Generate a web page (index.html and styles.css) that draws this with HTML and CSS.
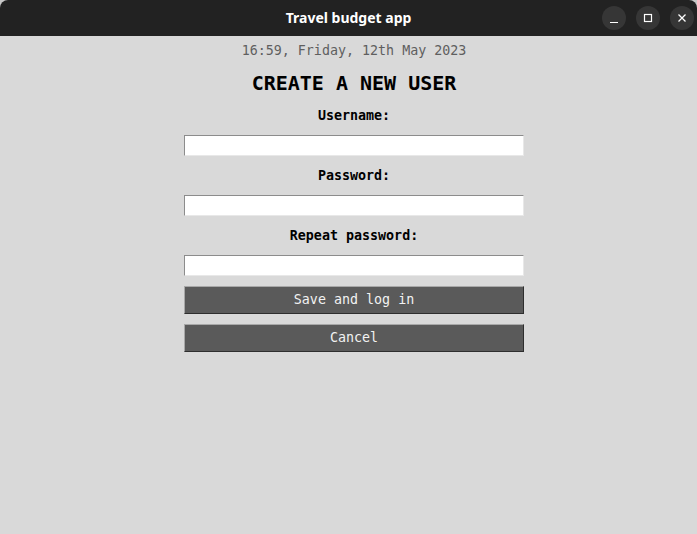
FILE: index.html
```html
<!DOCTYPE html>
<html lang="en">
<head>
<meta charset="utf-8">
<title>Travel budget app</title>
<link rel="stylesheet" href="styles.css">
</head>
<body>
<div class="window">
  <header class="titlebar">
    <div class="tb-spacer"></div>
    <div class="tb-title">Travel budget app</div>
    <div class="tb-controls">
      <span class="tb-btn"><svg width="24" height="24" viewBox="0 0 24 24"><line x1="8" y1="16.5" x2="16" y2="16.5" stroke="#fff" stroke-width="1.2"/></svg></span>
      <span class="tb-btn"><svg width="24" height="24" viewBox="0 0 24 24"><rect x="8.5" y="8.5" width="7" height="7" fill="none" stroke="#fff" stroke-width="1.2"/></svg></span>
      <span class="tb-btn"><svg width="24" height="24" viewBox="0 0 24 24"><path d="M8.5 8.5 L15.5 15.5 M15.5 8.5 L8.5 15.5" stroke="#fff" stroke-width="1.3"/></svg></span>
    </div>
  </header>
  <main class="content">
    <div class="date">16:59, Friday, 12th May 2023</div>
    <h1 class="heading">CREATE A NEW USER</h1>
    <form class="form">
      <label class="label">Username:</label>
      <input class="entry" type="text">
      <label class="label">Password:</label>
      <input class="entry" type="password">
      <label class="label">Repeat password:</label>
      <input class="entry" type="password">
      <button type="button" class="btn btn-first">Save and log in</button>
      <button type="button" class="btn">Cancel</button>
    </form>
  </main>
</div>
</body>
</html>
```

FILE: styles.css
```css
html, body {
  margin: 0;
  padding: 0;
  background: #c8c8c8;
}
.window {
  width: 697px;
  height: 534px;
  background: #d9d9d9;
  border-radius: 8px 8px 0 0;
  overflow: hidden;
  display: flex;
  flex-direction: column;
}
.titlebar {
  height: 36px;
  background: #222222;
  display: grid;
  grid-template-columns: 1fr auto 1fr;
  align-items: center;
}
.tb-title {
  color: #ffffff;
  font-family: "Noto Sans", "DejaVu Sans", sans-serif;
  font-weight: 700;
  font-size: 14px;
  line-height: 36px;
}
.tb-controls {
  display: flex;
  justify-content: flex-end;
  gap: 10px;
  padding-right: 3px;
}
.tb-btn {
  width: 24px;
  height: 24px;
  border-radius: 50%;
  background: #363636;
  display: block;
}
.tb-btn svg { display: block; }
.content {
  display: flex;
  flex-direction: column;
  align-items: center;
  padding-left: 11px;
  font-family: "DejaVu Sans Mono", monospace;
}
.date {
  margin-top: 7px;
  font-size: 13.33px;
  line-height: 16px;
  color: #5f5f5f;
}
.heading {
  margin: 12px 0 0;
  font-size: 20px;
  line-height: 24px;
  font-weight: 700;
  color: #000;
}
.form {
  display: flex;
  flex-direction: column;
  align-items: center;
  margin-top: 13px;
  width: 340px;
}
.label {
  font-size: 13.33px;
  line-height: 16px;
  font-weight: 700;
  color: #000;
  margin-top: 12px;
  margin-bottom: 11px;
}
.label:first-child { margin-top: 0; }
.entry {
  box-sizing: border-box;
  width: 340px;
  height: 21px;
  margin: 0;
  padding: 0;
  background: #ffffff;
  border-style: solid;
  border-width: 1px;
  border-color: #8c8c8c #e8e8e8 #e8e8e8 #8c8c8c;
  outline: none;
}
.btn {
  box-sizing: border-box;
  width: 340px;
  height: 28px;
  margin: 10px 0 0;
  padding: 0 0 2px;
  background: #5a5a5a;
  color: #f2f2f2;
  font-family: "DejaVu Sans Mono", monospace;
  font-size: 13.33px;
  border-style: solid;
  border-width: 1px;
  border-color: #a8a8a8 #2e2e2e #2e2e2e #a8a8a8;
}
```
